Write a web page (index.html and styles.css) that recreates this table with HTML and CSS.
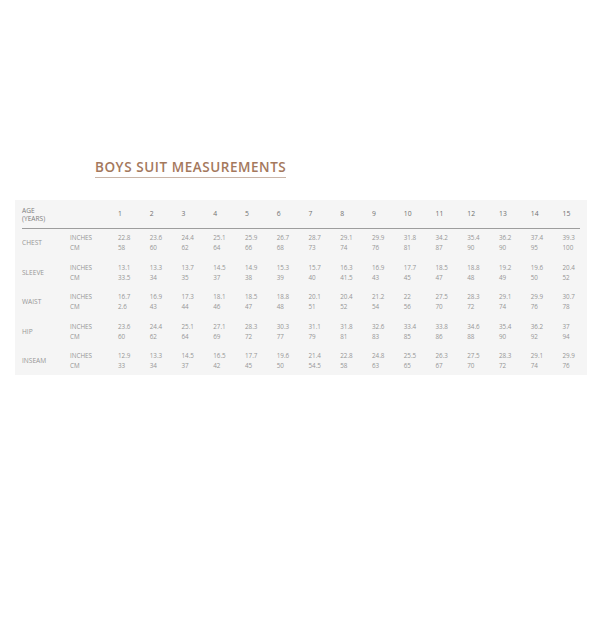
FILE: index.html
```html
<!DOCTYPE html>
<html>
<head>
<meta charset="utf-8">
<link rel="stylesheet" href="styles.css">
</head>
<body>
<div class="page">
  <h1 class="title">BOYS SUIT MEASUREMENTS</h1>
  <div class="sheet">
    <div class="row head">
      <div class="label">AGE<br>(YEARS)</div>
      <div class="unit"></div>
      <div class="n">1</div><div class="n">2</div><div class="n">3</div><div class="n">4</div><div class="n">5</div>
      <div class="n">6</div><div class="n">7</div><div class="n">8</div><div class="n">9</div><div class="n">10</div>
      <div class="n">11</div><div class="n">12</div><div class="n">13</div><div class="n">14</div><div class="n">15</div>
    </div>
    <div class="row">
      <div class="label">CHEST</div>
      <div class="unit">INCHES<br>CM</div>
      <div class="v">22.8<br>58</div><div class="v">23.6<br>60</div><div class="v">24.4<br>62</div><div class="v">25.1<br>64</div><div class="v">25.9<br>66</div>
      <div class="v">26.7<br>68</div><div class="v">28.7<br>73</div><div class="v">29.1<br>74</div><div class="v">29.9<br>76</div><div class="v">31.8<br>81</div>
      <div class="v">34.2<br>87</div><div class="v">35.4<br>90</div><div class="v">36.2<br>90</div><div class="v">37.4<br>95</div><div class="v">39.3<br>100</div>
    </div>
    <div class="row">
      <div class="label">SLEEVE</div>
      <div class="unit">INCHES<br>CM</div>
      <div class="v">13.1<br>33.5</div><div class="v">13.3<br>34</div><div class="v">13.7<br>35</div><div class="v">14.5<br>37</div><div class="v">14.9<br>38</div>
      <div class="v">15.3<br>39</div><div class="v">15.7<br>40</div><div class="v">16.3<br>41.5</div><div class="v">16.9<br>43</div><div class="v">17.7<br>45</div>
      <div class="v">18.5<br>47</div><div class="v">18.8<br>48</div><div class="v">19.2<br>49</div><div class="v">19.6<br>50</div><div class="v">20.4<br>52</div>
    </div>
    <div class="row">
      <div class="label">WAIST</div>
      <div class="unit">INCHES<br>CM</div>
      <div class="v">16.7<br>2.6</div><div class="v">16.9<br>43</div><div class="v">17.3<br>44</div><div class="v">18.1<br>46</div><div class="v">18.5<br>47</div>
      <div class="v">18.8<br>48</div><div class="v">20.1<br>51</div><div class="v">20.4<br>52</div><div class="v">21.2<br>54</div><div class="v">22<br>56</div>
      <div class="v">27.5<br>70</div><div class="v">28.3<br>72</div><div class="v">29.1<br>74</div><div class="v">29.9<br>76</div><div class="v">30.7<br>78</div>
    </div>
    <div class="row">
      <div class="label">HIP</div>
      <div class="unit">INCHES<br>CM</div>
      <div class="v">23.6<br>60</div><div class="v">24.4<br>62</div><div class="v">25.1<br>64</div><div class="v">27.1<br>69</div><div class="v">28.3<br>72</div>
      <div class="v">30.3<br>77</div><div class="v">31.1<br>79</div><div class="v">31.8<br>81</div><div class="v">32.6<br>83</div><div class="v">33.4<br>85</div>
      <div class="v">33.8<br>86</div><div class="v">34.6<br>88</div><div class="v">35.4<br>90</div><div class="v">36.2<br>92</div><div class="v">37<br>94</div>
    </div>
    <div class="row last">
      <div class="label">INSEAM</div>
      <div class="unit">INCHES<br>CM</div>
      <div class="v">12.9<br>33</div><div class="v">13.3<br>34</div><div class="v">14.5<br>37</div><div class="v">16.5<br>42</div><div class="v">17.7<br>45</div>
      <div class="v">19.6<br>50</div><div class="v">21.4<br>54.5</div><div class="v">22.8<br>58</div><div class="v">24.8<br>63</div><div class="v">25.5<br>65</div>
      <div class="v">26.3<br>67</div><div class="v">27.5<br>70</div><div class="v">28.3<br>72</div><div class="v">29.1<br>74</div><div class="v">29.9<br>76</div>
    </div>
  </div>
</div>
</body>
</html>
```

FILE: styles.css
```css
html, body {
  margin: 0;
  padding: 0;
  background: #ffffff;
}

.page {
  font-family: "Open Sans", "Liberation Sans", sans-serif;
  padding-top: 155px;
}

.title {
  margin: 0 0 0 95px;
  display: inline-block;
  font-size: 13.5px;
  font-weight: 600;
  letter-spacing: 0.55px;
  color: #a4785c;
  line-height: 17px;
  padding-bottom: 1px;
  border-bottom: 1px solid #c9b5a8;
}

.sheet {
  margin: 22px 0 0 15px;
  width: 572px;
  height: 175px;
  background: #f5f5f5;
  box-sizing: border-box;
  padding: 6px 0 0 7px;
  overflow: hidden;
}

.row {
  display: grid;
  grid-template-columns: 48px 48px repeat(14, 31.75px) 1fr;
  align-items: center;
  height: 29.5px;
  box-sizing: border-box;
  padding-top: 4px;
  font-size: 6.3px;
  font-weight: 400;
  line-height: 10px;
  color: #959595;
  align-content: start;
}

.row .label {
  align-self: center;
  font-size: 6.6px;
}

.row.head {
  height: 23px;
  padding-top: 0;
  margin-right: 7px;
  border-bottom: 1px solid #9d9d9d;
  align-items: start;
}

.head .label {
  color: #7c7c7c;
  line-height: 8px;
  padding-top: 1px;
}

.head .n {
  color: #707070;
  font-size: 6.8px;
  line-height: 10px;
  padding-top: 3px;
}

.row .label, .row .unit, .row .v {
  white-space: nowrap;
}
```
